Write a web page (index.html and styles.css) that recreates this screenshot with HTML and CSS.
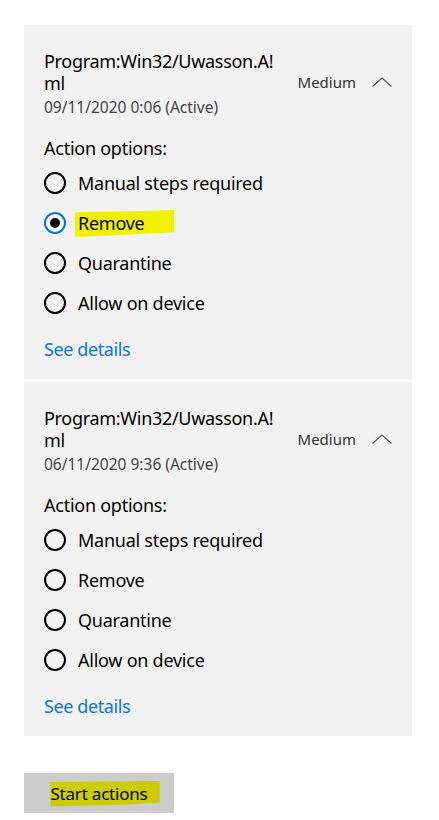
FILE: index.html
```html
<!DOCTYPE html>
<html lang="en">
<head>
<meta charset="utf-8">
<title>Threat actions</title>
<link rel="stylesheet" href="styles.css">
</head>
<body>
<main class="page">
  <section class="card">
    <div class="card-head">
      <div class="threat">
        <div class="threat-name">Program:Win32/Uwasson.A!ml</div>
        <div class="threat-date">09/11/2020 0:06 (Active)</div>
      </div>
      <div class="severity">
        <span class="severity-label">Medium</span>
        <svg class="chevron" width="20" height="10" viewBox="0 0 20 10"><polyline points="0.5,9.5 10,1 19.5,9.5" fill="none" stroke="#555" stroke-width="1.1"/></svg>
      </div>
    </div>
    <div class="options-title">Action options:</div>
    <ul class="options">
      <li class="option"><span class="radio"></span><span class="option-label">Manual steps required</span></li>
      <li class="option"><span class="radio radio-on"></span><span class="option-label mark">Remove</span></li>
      <li class="option"><span class="radio"></span><span class="option-label">Quarantine</span></li>
      <li class="option"><span class="radio"></span><span class="option-label">Allow on device</span></li>
    </ul>
    <a class="details" href="#">See details</a>
  </section>
  <section class="card">
    <div class="card-head">
      <div class="threat">
        <div class="threat-name">Program:Win32/Uwasson.A!ml</div>
        <div class="threat-date">06/11/2020 9:36 (Active)</div>
      </div>
      <div class="severity">
        <span class="severity-label">Medium</span>
        <svg class="chevron" width="20" height="10" viewBox="0 0 20 10"><polyline points="0.5,9.5 10,1 19.5,9.5" fill="none" stroke="#555" stroke-width="1.1"/></svg>
      </div>
    </div>
    <div class="options-title">Action options:</div>
    <ul class="options">
      <li class="option"><span class="radio"></span><span class="option-label">Manual steps required</span></li>
      <li class="option"><span class="radio"></span><span class="option-label">Remove</span></li>
      <li class="option"><span class="radio"></span><span class="option-label">Quarantine</span></li>
      <li class="option"><span class="radio"></span><span class="option-label">Allow on device</span></li>
    </ul>
    <a class="details" href="#">See details</a>
  </section>
  <button class="start" type="button"><span class="start-label">Start actions</span></button>
</main>
</body>
</html>
```
FILE: styles.css
```css
* { box-sizing: border-box; }
html, body { margin: 0; padding: 0; background: #fff; }
body {
  font-family: "Noto Sans", "Open Sans", "Liberation Sans", sans-serif;
  color: #000;
}
.page {
  width: 439px;
  padding: 25px 27px 0 24px;
}
.card {
  background: #f2f2f2;
  height: 354px;
  padding: 25px 20px 0 20px;
}
.card + .card { margin-top: 3px; }
.card-head {
  display: flex;
  align-items: center;
  gap: 8px;
}
.threat { flex: 1; min-width: 0; }
.threat-name {
  font-size: 18px;
  line-height: 22px;
  letter-spacing: -0.3px;
  word-break: break-all;
  width: 236px;
}
.threat-date {
  font-size: 15.5px;
  line-height: 20px;
  color: #444;
  margin-top: 3px;
}
.severity {
  display: flex;
  align-items: center;
  gap: 16px;
  margin-top: -3px;
}
.severity-label {
  font-size: 15px;
  line-height: 20px;
  color: #333;
}
.chevron { display: block; }
.options-title {
  font-size: 18px;
  line-height: 22px;
  letter-spacing: -0.25px;
  margin-top: 20px;
}
.options {
  list-style: none;
  margin: 4px 0 0 0;
  padding: 0;
}
.option {
  display: flex;
  align-items: center;
  height: 40px;
  gap: 12px;
}
.radio {
  width: 22px;
  height: 22px;
  border: 2px solid #000;
  border-radius: 50%;
  flex: none;
  position: relative;
}
.radio-on {
  border-color: #0078d4;
  background: #fff;
}
.radio-on::after {
  content: "";
  position: absolute;
  left: 4px;
  top: 4px;
  width: 10px;
  height: 10px;
  border-radius: 50%;
  background: #000;
}
.option-label {
  font-size: 18px;
  line-height: 22px;
  letter-spacing: -0.25px;
}
.mark { position: relative; z-index: 0; }
.mark::before {
  content: "";
  position: absolute;
  z-index: -1;
  left: -3px;
  top: -2px;
  width: 99px;
  bottom: -3px;
  background: #f2f200;
  clip-path: polygon(0 8%, 65% 4%, 100% 0, 100% 82%, 60% 90%, 0 100%);
}
.details {
  display: block;
  margin-top: 15px;
  font-size: 18px;
  line-height: 22px;
  letter-spacing: -0.4px;
  color: #0a78d4;
  text-decoration: none;
  width: max-content;
}
.start {
  display: block;
  margin-top: 37px;
  width: 150px;
  height: 40px;
  border: 0;
  padding: 0;
  background: #cccccc;
  font-family: inherit;
  font-size: 17px;
  letter-spacing: -0.2px;
  color: #000;
}
.start-label { position: relative; z-index: 0; }
.start-label::before {
  content: "";
  position: absolute;
  z-index: -1;
  left: 0;
  top: -1px;
  right: -12px;
  bottom: -2px;
  background: #cccc00;
  clip-path: polygon(0 6%, 75% 3%, 100% 0, 100% 85%, 70% 92%, 0 100%);
}
```
